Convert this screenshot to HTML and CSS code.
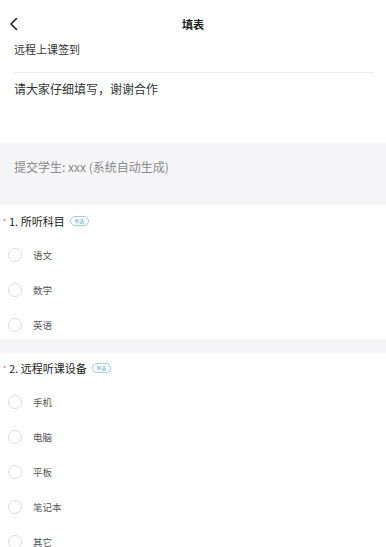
FILE: index.html
```html
<!DOCTYPE html>
<html lang="zh">
<head>
<meta charset="utf-8">
<title>填表</title>
<link rel="stylesheet" href="styles.css">
</head>
<body>
<div class="page">
  <header class="topbar">
    <svg class="back" width="10" height="14" viewBox="0 0 10 14"><path d="M7.5 1.5 L2 7 L7.5 12.5" fill="none" stroke="#222" stroke-width="1.6" stroke-linecap="round" stroke-linejoin="round"/></svg>
    <div class="title">填表</div>
  </header>
  <section class="intro">
    <div class="form-name">远程上课签到</div>
    <div class="divider"></div>
    <div class="form-desc">请大家仔细填写，谢谢合作</div>
  </section>
  <section class="student">提交学生: xxx (系统自动生成)</section>
  <section class="question q1">
    <div class="q-title"><span class="star">*</span>1. 所听科目<span class="badge">单选</span></div>
    <ul class="options">
      <li class="option"><span class="radio"></span>语文</li>
      <li class="option"><span class="radio"></span>数学</li>
      <li class="option"><span class="radio"></span>英语</li>
    </ul>
  </section>
  <div class="gap"></div>
  <section class="question q2">
    <div class="q-title"><span class="star">*</span>2. 远程听课设备<span class="badge">单选</span></div>
    <ul class="options">
      <li class="option"><span class="radio"></span>手机</li>
      <li class="option"><span class="radio"></span>电脑</li>
      <li class="option"><span class="radio"></span>平板</li>
      <li class="option"><span class="radio"></span>笔记本</li>
      <li class="option"><span class="radio"></span>其它</li>
    </ul>
  </section>
</div>
</body>
</html>
```

FILE: styles.css
```css
html, body {
  margin: 0;
  padding: 0;
  background: #ffffff;
}
body {
  font-family: "Noto Sans CJK SC", "Noto Sans", sans-serif;
  color: #222;
  overflow: hidden;
}
.page {
  width: 386px;
  height: 547px;
  overflow: hidden;
}
.topbar {
  position: relative;
  height: 40px;
  display: flex;
  justify-content: center;
  padding-top: 14px;
  box-sizing: border-box;
}
.back {
  position: absolute;
  left: 9px;
  top: 17px;
}
.title {
  font-size: 11px;
  font-weight: 700;
  line-height: 20px;
  color: #1a1a1a;
}
.intro {
  padding: 0 12px 44px 14px;
}
.form-name {
  font-size: 11px;
  line-height: 18px;
  color: #333;
}
.divider {
  margin-top: 14px;
  border-top: 1px solid #ececec;
}
.form-desc {
  margin-top: 6px;
  font-size: 12px;
  line-height: 20px;
  color: #333;
}
.student {
  background: #f5f5f7;
  padding: 14px 14px 28px;
  font-size: 12px;
  line-height: 20px;
  color: #8a8a8a;
}
.question {
  padding: 6px 0 4px 3px;
}
.q2 {
  padding-top: 5px;
}
.q-title {
  display: flex;
  align-items: center;
  font-size: 11px;
  line-height: 20px;
  color: #222;
}
.star {
  width: 6px;
  color: #e04848;
  font-size: 7px;
  line-height: 8px;
}
.badge {
  margin-left: 5px;
  width: 19px;
  height: 10px;
  box-sizing: border-box;
  border: 1px solid #9fcbe3;
  border-radius: 6px;
  font-size: 5px;
  line-height: 8px;
  color: #5aa3cc;
  text-align: center;
}
.options {
  list-style: none;
  margin: 14px 0 0;
  padding: 0;
  display: flex;
  flex-direction: column;
  gap: 15px;
}
.option {
  display: flex;
  align-items: center;
  height: 20px;
  font-size: 9.5px;
  color: #555;
}
.radio {
  width: 14px;
  height: 14px;
  box-sizing: border-box;
  border: 1px solid #dcdcdc;
  border-radius: 50%;
  margin-left: 5px;
  margin-right: 11px;
}
.gap {
  height: 14px;
  background: #f5f5f7;
}
```
